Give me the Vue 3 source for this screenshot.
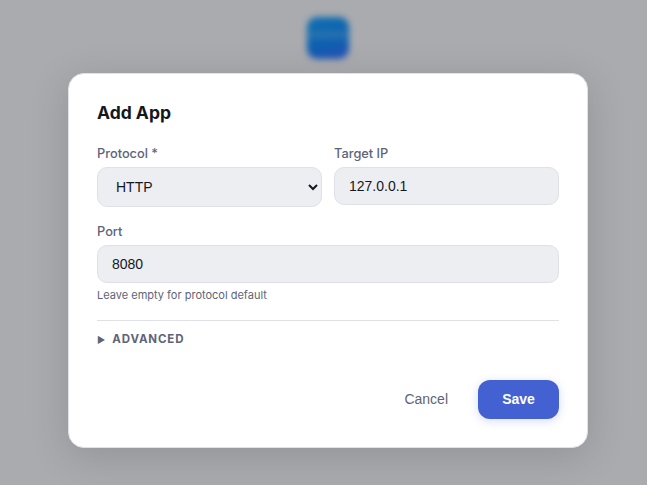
<template>
  <div class="page">
    <div class="app-icon"><div class="icon-band"></div></div>
    <div class="modal">
      <h2 class="modal-title">Add App</h2>

      <div class="form-row">
        <div class="form-item">
          <label class="form-label">Protocol *</label>
          <select v-model="protocol" class="form-select">
            <option value="http">HTTP</option>
            <option value="https">HTTPS</option>
          </select>
        </div>
        <div class="form-item">
          <label class="form-label">Target IP</label>
          <input v-model="targetIp" type="text" class="form-input" />
        </div>
      </div>

      <div class="form-item port-item">
        <label class="form-label">Port</label>
        <input v-model="port" type="text" class="form-input" />
        <div class="input-hint">Leave empty for protocol default</div>
      </div>

      <div class="advanced">
        <span class="advanced-arrow">▶</span>
        <span class="advanced-text">ADVANCED</span>
      </div>

      <div class="modal-footer">
        <button class="btn cancel">Cancel</button>
        <button class="btn save">Save</button>
      </div>
    </div>
  </div>
</template>

<script setup>
import { ref } from 'vue';

const protocol = ref('http');
const targetIp = ref('127.0.0.1');
const port = ref('8080');
</script>

<style>
html, body {
  margin: 0;
  background: #a9abaf;
}
</style>

<style scoped>
.page {
  position: relative;
  width: 647px;
  height: 485px;
  overflow: hidden;
  background: #a9abaf;
  font-family: Inter, "Liberation Sans", sans-serif;
  padding-top: 73px;
  box-sizing: border-box;
}

.app-icon {
  position: absolute;
  top: 17px;
  left: 307px;
  width: 42px;
  height: 42px;
  border-radius: 10px;
  background: linear-gradient(165deg, #1170b0, #0c5fb0 60%, #2a4fb4);
  filter: blur(3px);
  overflow: hidden;
}

.icon-band {
  margin-top: 15px;
  height: 6px;
  background: rgba(80, 135, 175, 0.55);
  filter: blur(2px);
}

.modal {
  box-sizing: border-box;
  width: 520px;
  height: 375px;
  margin-left: 68px;
  padding: 28px;
  background: #fff;
  border: 1px solid #e0e1e8;
  border-radius: 16px;
  box-shadow: 0 8px 40px rgba(0, 0, 0, 0.14);
}

.modal-title {
  margin: 0 0 22px;
  font-size: 17.5px;
  line-height: 22px;
  font-weight: 700;
  color: #15171f;
}

.form-row {
  display: grid;
  grid-template-columns: 225px 225px;
  gap: 12px;
}

.form-item {
  display: flex;
  flex-direction: column;
  align-items: stretch;
}

.port-item {
  margin-top: 17px;
}

.form-label {
  font-size: 12.8px;
  line-height: 16px;
  font-weight: 500;
  color: #5e6478;
  margin-bottom: 5px;
}

.form-input,
.form-select {
  box-sizing: border-box;
  width: 100%;
  height: 38px;
  padding: 0 14px;
  background-color: #edeef2;
  border: 1px solid #e0e1e8;
  border-radius: 10px;
  font-family: "Liberation Sans", Arial, sans-serif;
  font-size: 14px;
  color: #15171f;
  outline: none;
}

.form-select {
  height: 40px;
}

.input-hint {
  margin-top: 5px;
  font-size: 11px;
  line-height: 14px;
  color: #5e6478;
}

.advanced {
  margin-top: 18px;
  padding-top: 10px;
  border-top: 1px solid #e0e1e8;
  display: flex;
  align-items: center;
  gap: 7px;
  height: 16px;
  color: #5e6478;
}

.advanced-arrow {
  font-size: 9px;
}

.advanced-text {
  font-size: 11.5px;
  font-weight: 700;
  letter-spacing: 0.85px;
}

.modal-footer {
  display: flex;
  justify-content: flex-end;
  align-items: center;
  gap: 8px;
  margin-top: 33px;
}

.btn {
  height: 39px;
  padding-bottom: 2px;
  border: none;
  border-radius: 12px;
  font-family: "Liberation Sans", Arial, sans-serif;
  font-size: 14px;
  cursor: pointer;
}

.btn.cancel {
  padding-left: 22px;
  padding-right: 22px;
  background: none;
  color: #5e6478;
  font-weight: 400;
}

.btn.save {
  width: 81px;
  background: #4361d1;
  color: #fff;
  font-weight: 700;
  box-shadow: 0 2px 10px rgba(67, 97, 209, 0.22);
}
</style>
